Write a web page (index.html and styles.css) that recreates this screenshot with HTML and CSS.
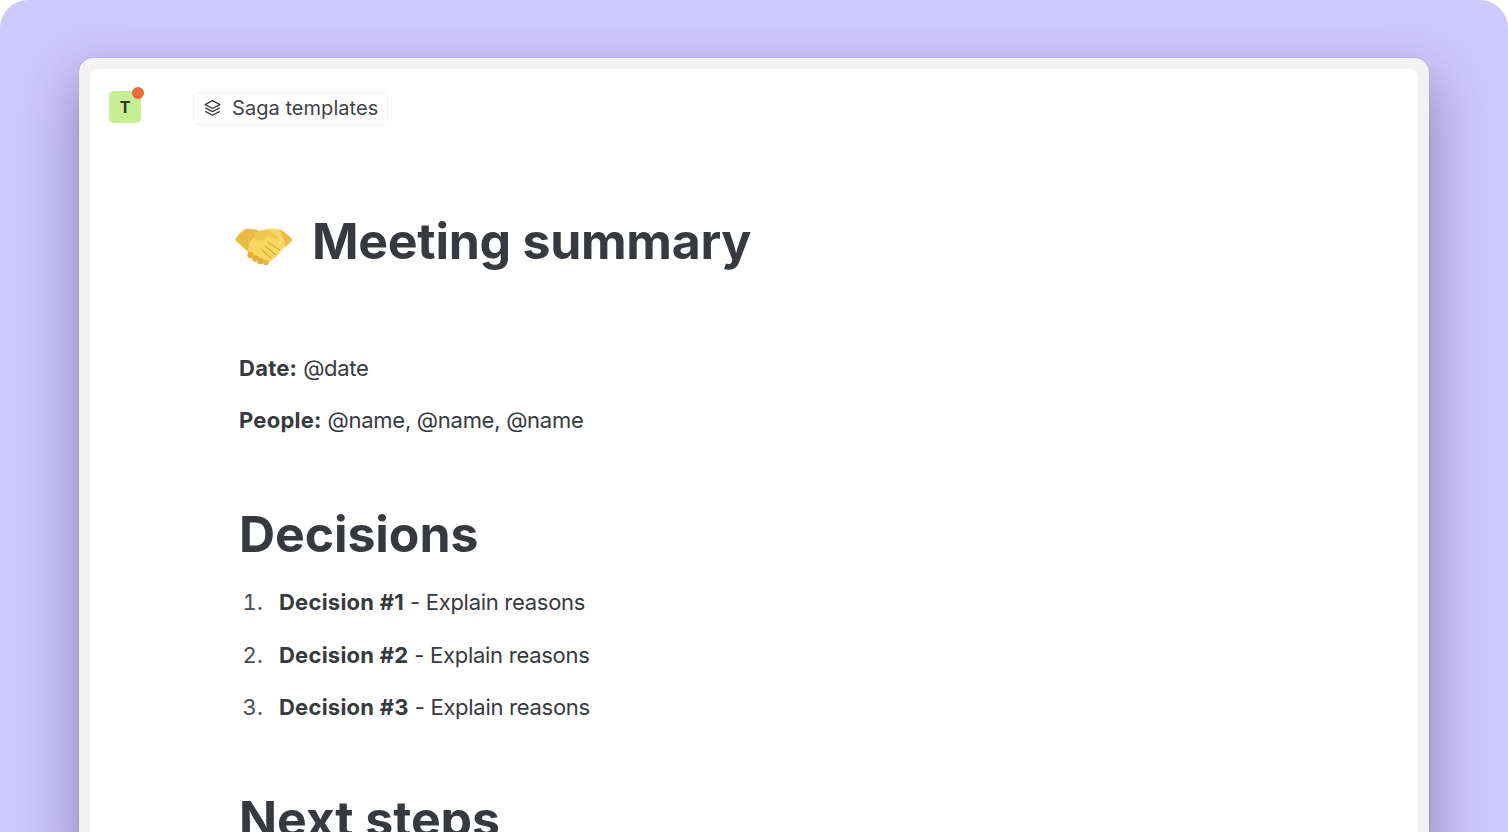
FILE: index.html
```html
<!DOCTYPE html>
<html>
<head>
  <meta charset="UTF-8">
  <title>Meeting summary</title>
  <link rel="stylesheet" href="styles.css">
</head>
<body>
  <div class="stage">
    <div class="frame">
      <div class="window">
        <div class="topbar">
          <div class="logo">T<span class="dot"></span></div>
          <div class="tag">
            <svg class="tag-icon" width="19" height="19" viewBox="0 0 18 18" fill="none" stroke="#3a3e42" stroke-width="1.3" stroke-linejoin="round" stroke-linecap="round">
              <path d="M9 1.6 16 5.3 9 9 2 5.3Z"/>
              <path d="M2.6 8.6 9 12 15.4 8.6"/>
              <path d="M2.6 11.9 9 15.4 15.4 11.9"/>
            </svg>
            <span>Saga templates</span>
          </div>
        </div>
        <div class="doc">
          <div class="title-row">
            <svg class="emoji" width="58" height="42" viewBox="0 0 58 42">
              <!-- left hand, behind -->
              <path fill="#ecbc42" d="M.8 13.5C3 10 7 5.5 10 4.2c3-.8 9-.5 14 1.5l8 9-12 14c-3 2-5 0-7-2L2 17C.7 16 .2 14.700.8 13.500Z"/>
              <!-- right hand -->
              <path fill="#f8d862" d="M24 7c5-3 13-4.500 19-3 4 .8 10 6 13.500 9.500.8 1 .5 2-.5 3L46 26c-2 4-8 8-12 11-2 1.500-4 1.500-6 .5L15 29c-2-2-2-8 0-12Z"/>
              <!-- right cuff -->
              <path fill="#ecbc42" d="M44 4.200c4 1 9 5.800 12.500 9.300.8 1 .5 2-.5 3l-5.500 5.500C49 15 47 9 44 4.200Z"/>
              <!-- thumb -->
              <path fill="#f0c64c" d="M24 6c4-1.500 8-1.500 11 0l8 6c1 1 .5 2-.5 2L33 11.500c-3 1.500-5 3.500-8 4-3 .5-5-.5-5.500-2.500C19 11 21 7.500 24 6Z"/>
              <!-- fingertips -->
              <circle cx="15.500" cy="30" r="3.200" fill="#e5ae38"/>
              <circle cx="20.500" cy="33.500" r="3.300" fill="#e5ae38"/>
              <circle cx="25.500" cy="36" r="3.300" fill="#e5ae38"/>
              <circle cx="31" cy="37.500" r="2.800" fill="#e8b33c"/>
              <path fill="none" stroke="#e0aa38" stroke-width="1.100" stroke-linecap="round" d="M33 17 44.500 25M30 21 40.500 29.500M27 25 36 33"/>
            </svg>
            <h1>Meeting summary</h1>
          </div>
          <p class="meta"><b>Date:</b> @date</p>
          <p class="meta"><b>People:</b> @name, @name, @name</p>
          <h2>Decisions</h2>
          <ol>
            <li><b>Decision #1</b> - Explain reasons</li>
            <li><b>Decision #2</b> - Explain reasons</li>
            <li><b>Decision #3</b> - Explain reasons</li>
          </ol>
          <h2 class="next">Next steps</h2>
        </div>
      </div>
    </div>
  </div>
</body>
</html>
```

FILE: styles.css
```css
html, body {
  margin: 0;
  padding: 0;
  height: 832px;
  overflow: hidden;
  background-color: #fff;
  font-family: Inter, "Liberation Sans", sans-serif;
  color: #363a3e;
}

.stage {
  height: 832px;
  box-sizing: border-box;
  padding: 58px 79px 0;
  background-color: #cfc8fc;
  border-radius: 28px 28px 0 0;
  overflow: hidden;
}

.frame {
  height: 800px;
  box-sizing: border-box;
  padding: 11px 11px 0;
  background-color: #f3f2f0;
  border-radius: 14px;
  box-shadow: 0 0 1px rgba(60, 50, 110, 0.6), 0 24px 56px rgba(60, 50, 110, 0.5);
}

.window {
  height: 100%;
  background-color: #fff;
  border-radius: 8px;
}

.topbar {
  display: flex;
  align-items: center;
  height: 46px;
  padding: 16px 0 0 19px;
}

.logo {
  position: relative;
  width: 32px;
  height: 32px;
  margin-top: -2px;
  border-radius: 5px;
  background-color: #c8ee94;
  color: #2c3a2a;
  font-size: 16px;
  font-weight: 700;
  line-height: 32px;
  text-align: center;
}

.dot {
  position: absolute;
  top: -4px;
  right: -3px;
  width: 12px;
  height: 12px;
  border-radius: 50%;
  background-color: #ec6a3c;
}

.tag {
  display: flex;
  align-items: center;
  gap: 10px;
  height: 33px;
  box-sizing: border-box;
  margin-left: 52px;
  padding: 0 9px;
  border: 1px solid #f2f2f0;
  border-radius: 6px;
  font-size: 20px;
  letter-spacing: 0.05px;
  color: #3e4246;
}

.doc {
  padding: 0 0 0 149px;
}

.title-row {
  display: flex;
  align-items: center;
  gap: 19px;
  height: 60px;
  margin: 80px 0 0 -4px;
}

.emoji {
  margin-top: 10px;
}

h1 {
  margin: 0;
  font-size: 50px;
  font-weight: 700;
  line-height: 60px;
  letter-spacing: -0.27px;
}

.meta {
  margin: 0 0 20px;
  font-size: 22px;
  line-height: 32px;
  letter-spacing: -0.28px;
}

.title-row + .meta {
  margin-top: 81px;
}

b {
  font-weight: 700;
  letter-spacing: 0.25px;
}

h2 {
  margin: 0;
  padding-top: 48px;
  font-size: 50px;
  font-weight: 700;
  line-height: 60px;
  letter-spacing: -0.1px;
}

ol {
  margin: 22px 0 0;
  padding: 0;
  list-style: none;
  counter-reset: item;
  font-size: 22px;
  line-height: 32px;
  letter-spacing: -0.28px;
}

li {
  display: flex;
  gap: 0.27em;
  margin-bottom: 20.5px;
  counter-increment: item;
}

li::before {
  content: counter(item) ".";
  width: 24px;
  margin-right: 10px;
  text-align: right;
  font-feature-settings: "tnum";
  letter-spacing: 0.1px;
  color: #4a4e52;
}

h2.next {
  padding-top: 45px;
}
```
